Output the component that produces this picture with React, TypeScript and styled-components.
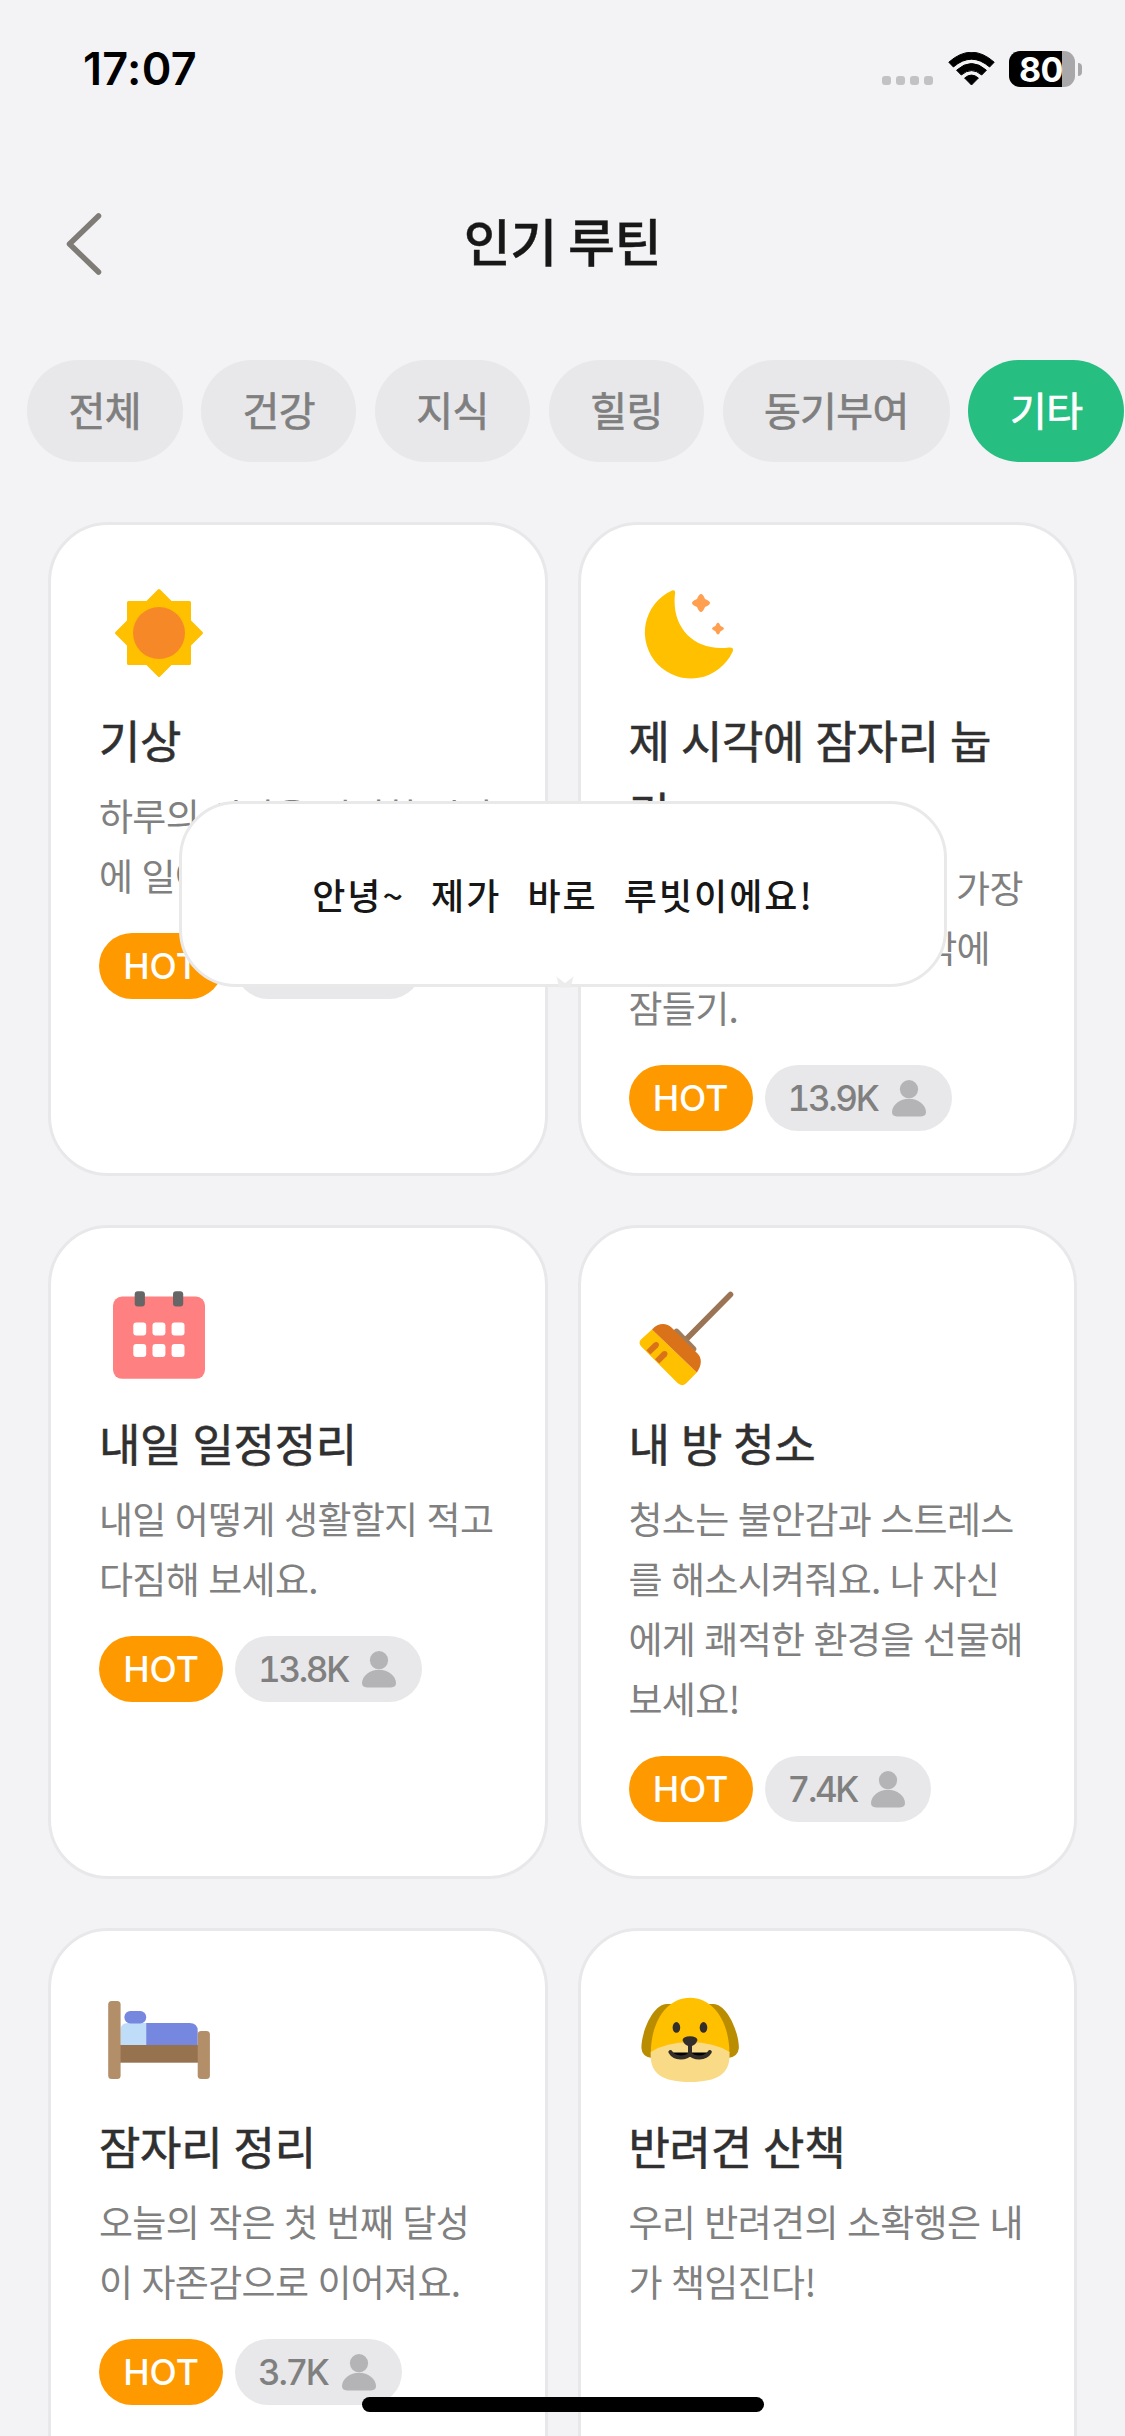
import React from "react";
import styled, { createGlobalStyle } from "styled-components";

const GlobalStyle = createGlobalStyle`
  * { box-sizing: border-box; }
  body {
    margin: 0;
    background: #f3f3f5;
    overflow: hidden;
    font-family: "Inter", "Noto Sans CJK KR", sans-serif;
  }
`;

const Screen = styled.div`
  position: relative;
  width: 1125px;
  height: 2436px;
  overflow: hidden;
  background: #f3f3f5;
`;

const StatusBar = styled.div`
  display: flex;
  align-items: center;
  justify-content: space-between;
  height: 138px;
  padding: 0 43px 0 83px;
`;

const Clock = styled.time`
  font-size: 45px;
  font-weight: 600;
  line-height: 60px;
  letter-spacing: 0.3px;
  color: #000;
`;

const StatusIcons = styled.div`
  display: flex;
  align-items: center;
`;

const SignalDots = styled.div`
  display: flex;
  gap: 5px;
  margin: 23px 15px 0 0;
`;

const SignalDot = styled.i`
  width: 9px;
  height: 9px;
  border-radius: 3px;
  background: #c2c2c4;
`;

const Battery = styled.div`
  display: flex;
  align-items: center;
  justify-content: center;
  width: 66px;
  height: 36px;
  margin-left: 14px;
  padding-right: 2px;
  border-radius: 11px;
  background: linear-gradient(to right, #000 53px, #a8a8aa 53px);
  color: #fff;
  font-size: 34px;
  font-weight: 700;
  letter-spacing: -0.5px;
`;

const BatteryTip = styled.i`
  width: 4px;
  height: 13px;
  margin-left: 3px;
  border-radius: 0 6px 6px 0;
  background: #a8a8aa;
`;

const Header = styled.header`
  display: grid;
  grid-template-columns: 150px 1fr 150px;
  align-items: center;
  height: 212px;
  padding-bottom: 2px;
`;

const BackButton = styled.button`
  display: flex;
  width: 120px;
  height: 100px;
  margin: 0;
  padding: 18px 0 0 62px;
  border: 0;
  background: none;
`;

const BackIcon = styled.svg`
  flex: none;
`;

const PageTitle = styled.h1`
  margin: 0;
  padding-bottom: 7px;
  text-align: center;
  font-family: "Noto Sans CJK KR", sans-serif;
  font-size: 51px;
  font-weight: 500;
  line-height: 72px;
  letter-spacing: -0.3px;
  -webkit-text-stroke: 0.4px #171717;
  color: #171717;
`;

const Chips = styled.nav`
  display: flex;
  gap: 18.4px;
  height: 112px;
  padding: 10px 0 0 27px;
`;

const Chip = styled.button<{ $active?: boolean; $wide?: boolean }>`
  flex: none;
  width: ${(p) => (p.$wide ? 227.5 : 155.5)}px;
  height: 102px;
  margin: 0;
  padding: 0 0 4px 0;
  border: 0;
  border-radius: 51px;
  background: ${(p) => (p.$active ? "#27be82" : "#e8e8ea")};
  color: ${(p) => (p.$active ? "#fff" : "#7f7f7f")};
  -webkit-text-stroke: 0.7px currentColor;
  font-family: "Noto Sans CJK KR", sans-serif;
  font-size: 40px;
  font-weight: 400;
  letter-spacing: -0.6px;
`;

const CardGrid = styled.main`
  display: grid;
  grid-template-columns: 1fr 1fr;
  grid-auto-rows: 654px;
  gap: 49px 30px;
  padding: 60px 48px 0;
`;

const Card = styled.article`
  padding: 48px;
  border: 3px solid #e8e8ea;
  border-radius: 60px;
  background: #fff;
  white-space: pre;
`;

const CardIcon = styled.svg`
  display: block;
  width: 120px;
  height: 120px;
`;

const CardTitle = styled.h2`
  margin: 11px 0 0;
  font-family: "Noto Sans CJK KR", sans-serif;
  font-size: 45px;
  font-weight: 400;
  line-height: 72px;
  letter-spacing: -0.3px;
  word-spacing: 1.5px;
  -webkit-text-stroke: 0.6px #303030;
  color: #303030;
`;

const CardText = styled.p`
  margin: 9px 0 0;
  font-family: "Noto Sans CJK KR", sans-serif;
  font-size: 37px;
  font-weight: 400;
  line-height: 60px;
  letter-spacing: -0.7px;
  word-spacing: 1.6px;
  color: #808080;
`;

const Tags = styled.div`
  display: flex;
  gap: 12px;
  margin-top: 28px;
`;

const HotTag = styled.span`
  display: flex;
  align-items: center;
  justify-content: center;
  width: 124px;
  height: 66px;
  border-radius: 33px;
  background: #ff9900;
  color: #fff;
  font-size: 35.5px;
  font-weight: 450;
  letter-spacing: -0.1px;
`;

const CountTag = styled.span`
  display: flex;
  align-items: center;
  gap: 14px;
  height: 66px;
  padding: 0 26px 0 23px;
  border-radius: 33px;
  background: #e8e8ea;
  color: #808080;
  font-size: 35px;
  font-weight: 500;
  font-variant-numeric: tabular-nums;
  letter-spacing: -2.3px;
`;

const Popup = styled.div`
  position: absolute;
  left: 179px;
  top: 801px;
  display: flex;
  align-items: center;
  justify-content: center;
  width: 768px;
  height: 186px;
  border: 3px solid #e9e9e9;
  border-radius: 57px;
  background: #fff;
`;

const PopupText = styled.p`
  margin: 0;
  font-family: "Noto Sans CJK KR", sans-serif;
  font-size: 36px;
  font-weight: 500;
  letter-spacing: 2px;
  word-spacing: 16px;
  white-space: nowrap;
  color: #171717;
`;

const PopupTail = styled.i`
  position: absolute;
  left: 374px;
  bottom: -4px;
  width: 18px;
  height: 12px;
  background: #ececec;
  clip-path: polygon(0 0, 50% 60%, 100% 0, 80% 100%, 20% 100%);
  filter: blur(1.5px);
`;

const HomeIndicator = styled.div`
  position: absolute;
  left: 362px;
  top: 2397px;
  width: 402px;
  height: 15px;
  border-radius: 8px;
  background: #000;
`;

const WifiIcon = () => (
  <svg width="47" height="34" viewBox="0 0 47 34">
    <path d="M0.8 10.2 Q23.5 -9.8 46.2 10.2 L41.6 15 Q23.5 -0.6 5.4 15 Z" fill="#000" stroke="#000" strokeWidth="1" strokeLinejoin="round" />
    <path d="M8.6 18.2 Q23.5 4.8 38.4 18.2 L33.7 23 Q23.5 14.2 13.3 23 Z" fill="#000" stroke="#000" strokeWidth="1" strokeLinejoin="round" />
    <path d="M16.6 26 Q23.5 20.2 30.4 26 L23.5 33 Z" fill="#000" stroke="#000" strokeWidth="1" strokeLinejoin="round" />
  </svg>
);

const PersonIcon = () => (
  <svg width="34" height="37" viewBox="0 0 34 37">
    <circle cx="17" cy="9.2" r="9.1" fill="#b4b4b6" />
    <path d="M0 32 C0 25 8 18.8 17 18.8 S34 25 34 32 Q34 36.4 29 36.4 H5 Q0 36.4 0 32 Z" fill="#b4b4b6" />
  </svg>
);

const SunArt = () => (
  <>
    <path
      d="M60 17.5 L72 29.5 H90.5 V48 L102.5 60 L90.5 72 V90.5 H72 L60 102.5 L48 90.5 H29.5 V72 L17.5 60 L29.5 48 V29.5 H48 Z"
      fill="#ffc000"
      stroke="#ffc000"
      strokeWidth="3"
      strokeLinejoin="round"
    />
    <circle cx="60" cy="60" r="26" fill="#f78828" />
  </>
);

const MoonArt = () => (
  <>
    <path d="M43 17.5 Q47 16.5 46 21 C42 55 66 79 100 74.5 Q105.5 74 103.5 79 A46 46 0 1 1 43 17.5 Z" fill="#ffc000" />
    <path d="M72 21 Q74 21 76 26 Q81 28 81 30 Q81 32 76 34 Q74 39 72 39 Q70 39 68 34 Q63 32 63 30 Q63 28 68 26 Q70 21 72 21 Z" fill="#ff9f50" />
    <path d="M89 49.6 Q90.3 49.8 91.6 53 Q95 54.4 95 55.6 Q95 56.8 91.6 58.2 Q90.3 61.4 89 61.6 Q87.7 61.4 86.4 58.2 Q83 56.8 83 55.6 Q83 54.4 86.4 53 Q87.7 49.8 89 49.6 Z" fill="#ff9f50" />
  </>
);

const CalendarArt = () => (
  <>
    <rect x="14" y="20.6" width="92" height="82.2" rx="9" fill="#ff8080" />
    {[35.7, 74].map((x) => (
      <rect key={x} x={x} y="15.3" width="10.2" height="15.2" rx="3" fill="#666" />
    ))}
    {[46.5, 68].map((y) =>
      [34.3, 53.5, 72.6].map((x) => (
        <rect key={`${x}-${y}`} x={x} y={y} width="12.9" height="12.9" rx="3" fill="#fff" />
      ))
    )}
  </>
);

const BroomArt = () => (
  <>
    <path d="M101.5 18.5 L56.5 64" stroke="#9a7454" strokeWidth="5.6" strokeLinecap="round" />
    <path d="M47.5 56 L64 73" stroke="#a07c5c" strokeWidth="6.6" strokeLinecap="round" />
    <path d="M23 53.6 L12.5 63 Q8.5 66.5 12.5 70.8 L48.5 107 Q52.8 111 57 107.5 L67.8 96.6 Z" fill="#ffc000" />
    <path d="M23 53.6 C29 46.5 37.5 46.5 42.5 51.5 L68.5 77.5 C73 82 73 89 67.8 96.6 Z" fill="#da721a" />
    <path d="M17.4 74.3 L25 66.7 Q27.5 65 29.4 67 Q31 69 29 71.2 L21.4 78.5 Z" fill="#da721a" />
    <path d="M26 83.2 L33.6 75.6 Q36 74 38 76 Q39.5 78 37.6 80.2 L30.3 87.4 Z" fill="#da721a" />
  </>
);

const BedArt = () => (
  <>
    <rect x="21" y="65.9" width="78" height="17.8" fill="#97724f" />
    <path d="M21.6 66 V51 Q21.6 44 29 44 H47.2 V66 Z" fill="#bfddf9" />
    <path d="M47.2 44 H90.5 Q98.7 44 98.7 52 V66 H47.2 Z" fill="#7587df" />
    <rect x="25.4" y="32" width="21.8" height="12.4" rx="6" fill="#7587df" />
    <rect x="9.2" y="21.9" width="12.4" height="78" rx="3.5" fill="#b28e69" />
    <rect x="98.7" y="52" width="12.2" height="47.9" rx="3.5" fill="#b28e69" />
  </>
);

const DogArt = () => (
  <>
    <path d="M39 25 C25 23 12.4 52 12.4 69 Q13 78 23 79 H99 Q109 78 109.9 69 C109.9 52 97 23 83 25 Z" fill="#ba8c00" />
    <path d="M61 18.8 C85 18.8 100.4 44 100.4 74 L61 82 L21.8 74 C21.8 44 37 18.8 61 18.8 Z" fill="#ffc000" />
    <path d="M21.7 73 Q37 63.3 61 63.3 T100.5 73 V77 C100.5 94 89 103 61 103 S21.700 94 21.700 77 Z" fill="#f9da86" />
    <ellipse cx="47.4" cy="48.4" rx="3.8" ry="5.3" fill="#332e2a" />
    <ellipse cx="74.5" cy="48.4" rx="3.8" ry="5.3" fill="#332e2a" />
    <path d="M41.4 73.4 H80.8 Q77 78 70.5 78 Q63 78 61 74.5 Q59 78 51.5 78 Q45 78 41.4 73.4 Z" fill="#000" />
    <path d="M61 65 V74.6 M41.4 73 Q44.5 78.4 51.5 78.4 Q58.5 78.4 61 74.6 Q63.5 78.4 70.5 78.4 Q77.5 78.4 80.8 73" fill="none" stroke="#332e2a" strokeWidth="4" strokeLinecap="round" />
    <path d="M53.5 61 Q54.5 57.3 61 57.3 T68.5 61 Q66.5 67 61 67 T53.5 61 Z" fill="#332e2a" />
  </>
);

interface Routine {
  art: React.ReactNode;
  title: string;
  text: string;
  count?: string;
}

const routines: Routine[] = [
  { art: <SunArt />, title: "기상", text: "하루의 시작을 일정한 시간\n에 일어나 보세요.", count: "14.3K" },
  { art: <MoonArt />, title: "제 시각에 잠자리 눕\n기", text: "규칙적인 수면 습관은 가장\n중요해요. 정해진 시각에\n잠들기.", count: "13.9K" },
  { art: <CalendarArt />, title: "내일 일정정리", text: "내일 어떻게 생활할지 적고\n다짐해 보세요.", count: "13.8K" },
  { art: <BroomArt />, title: "내 방 청소", text: "청소는 불안감과 스트레스\n를 해소시켜줘요. 나 자신\n에게 쾌적한 환경을 선물해\n보세요!", count: "7.4K" },
  { art: <BedArt />, title: "잠자리 정리", text: "오늘의 작은 첫 번째 달성\n이 자존감으로 이어져요.", count: "3.7K" },
  { art: <DogArt />, title: "반려견 산책", text: "우리 반려견의 소확행은 내\n가 책임진다!" },
];

const categories = ["전체", "건강", "지식", "힐링", "동기부여", "기타"];

export default function App() {
  return (
    <>
      <GlobalStyle />
      <Screen>
        <StatusBar>
          <Clock>17:07</Clock>
          <StatusIcons>
            <SignalDots>
              <SignalDot />
              <SignalDot />
              <SignalDot />
              <SignalDot />
            </SignalDots>
            <WifiIcon />
            <Battery>80</Battery>
            <BatteryTip />
          </StatusIcons>
        </StatusBar>
        <Header>
          <BackButton aria-label="뒤로">
            <BackIcon width="44" height="66" viewBox="0 0 44 66" fill="none" stroke="#7f7b76" strokeWidth="5.5" strokeLinecap="round" strokeLinejoin="round">
              <path d="M36.5 5 L7.5 33 L36.5 61" />
            </BackIcon>
          </BackButton>
          <PageTitle>인기 루틴</PageTitle>
        </Header>
        <Chips>
          {categories.map((name) => (
            <Chip key={name} $active={name === "기타"} $wide={name.length > 2}>
              {name}
            </Chip>
          ))}
        </Chips>
        <CardGrid>
          {routines.map((routine) => (
            <Card key={routine.title}>
              <CardIcon viewBox="0 0 120 120" fill="none">
                {routine.art}
              </CardIcon>
              <CardTitle>{routine.title}</CardTitle>
              <CardText>{routine.text}</CardText>
              {routine.count && (
                <Tags>
                  <HotTag>HOT</HotTag>
                  <CountTag>
                    {routine.count}
                    <PersonIcon />
                  </CountTag>
                </Tags>
              )}
            </Card>
          ))}
        </CardGrid>
        <Popup>
          <PopupText>안녕~ 제가 바로 루빗이에요!</PopupText>
          <PopupTail />
        </Popup>
        <HomeIndicator />
      </Screen>
    </>
  );
}
